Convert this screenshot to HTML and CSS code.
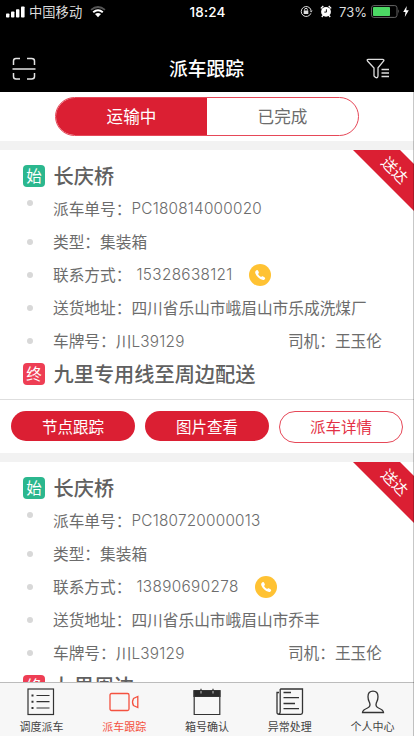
FILE: index.html
```html
<!DOCTYPE html>
<html lang="zh-CN">
<head>
<meta charset="utf-8">
<title>派车跟踪</title>
<link rel="stylesheet" href="styles.css">
</head>
<body>
<div class="app">
  <header class="top">
    <div class="status">
      <div class="status-left">
        <svg width="19" height="12" viewBox="0 0 19 12" fill="#fff"><rect x="0" y="7.5" width="3.4" height="4" rx=".8"/><rect x="5" y="5.5" width="3.4" height="6" rx=".8"/><rect x="10" y="3.2" width="3.4" height="8.300" rx=".8"/><rect x="15" y="0.500" width="3.600" height="11" rx=".8"/></svg>
        <span class="carrier">中国移动</span>
        <svg class="wifi" width="16" height="12" viewBox="0 0 16 12" fill="none"><path d="M1 3.800Q8-1.800 15 3.800" stroke="#555" stroke-width="1.700"/><path d="M3.200 6.200Q8 2.200 12.800 6.200" stroke="#fff" stroke-width="2"/><path d="M5 8.100Q8 5.800 11 8.100L8 11.300Z" fill="#fff"/></svg>
      </div>
      <span class="clock">18:24</span>
      <div class="status-right">
        <svg width="13" height="13" viewBox="0 0 13 13" fill="none" stroke="#ddd"><path d="M10.900 8.300A5 5 0 1 1 11 5"/><path d="M9.600 5.400h3L11.100 7.600z" fill="#ddd" stroke="none"/><rect x="3.700" y="5.500" width="4.600" height="3.500" fill="#ddd" stroke="none"/><path d="M4.600 5.500V4.700a1.400 1.400 0 0 1 2.800 0v.8"/></svg>
        <svg class="alarm" width="12" height="13" viewBox="0 0 12 13"><circle cx="6" cy="6.800" r="4.900" fill="#fff"/><path d="M.8 3.400L3.300 1M11.200 3.400L8.700 1M2.900 10.500L1.800 12M9.100 10.500L10.200 12" stroke="#fff" stroke-width="1.300"/><path d="M6.400 4.300V7.100H4.300" fill="none" stroke="#000" stroke-width=".9"/></svg>
        <span class="percent">73%</span>
        <svg class="battery" width="29" height="13" viewBox="0 0 29 13"><rect x=".6" y=".6" width="25.400" height="11.800" rx="2.200" fill="#000" stroke="#666"/><rect x="2" y="2" width="17" height="9" rx=".8" fill="#4cd964"/><path d="M27 4.300q1.800 2.200 0 4.400z" fill="#777"/></svg>
        <svg width="6" height="11" viewBox="0 0 6 11"><path d="M3.700 0L.2 6.100H2.500L1.800 11 5.800 4.300H3.300z" fill="#fff"/></svg>
      </div>
    </div>
    <div class="nav">
      <svg width="24" height="24" viewBox="0 0 24 24" fill="none" stroke="#e4e4e4" stroke-width="1.500"><path d="M1.500 8V4Q1.500 1.500 4 1.500H8M15 1.500H19.500Q22.500 1.500 22.500 4V8M1.500 16V19.500Q1.500 22 4 22H8M15 22H19.500Q22.500 22 22.500 19.500V16M.5 12H23.500"/></svg>
      <h1>派车跟踪</h1>
      <svg width="24" height="22" viewBox="0 0 24 22" fill="none" stroke="#ddd" stroke-width="1.300"><path d="M2.300 1.300H16.500Q18.500 1.500 17.700 3L12 9.800V17.600Q12 20.600 9.500 19.400L8 18V10L1.500 3Q.5 1.500 2.300 1.300ZM15.500 11.500H23M15.500 15H23M15.500 18.500H23"/></svg>
    </div>
  </header>

  <div class="filter">
    <div class="segments"><span class="segment active">运输中</span><span class="segment">已完成</span></div>
  </div>

  <main class="list">
    <article class="card">
      <div class="ribbon"><span>送达</span></div>
      <div class="details">
        <div class="place"><i class="badge start">始</i><h2>长庆桥</h2></div>
        <div class="row first"><i class="dot"></i><span>派车单号：</span><span class="num order">PC180814000020</span></div>
        <div class="row"><i class="dot"></i><span>类型：集装箱</span></div>
        <div class="row"><i class="dot"></i><span>联系方式：</span><span class="num phone">15328638121</span><svg class="call" width="22" height="22" viewBox="0 0 22 22"><circle cx="11" cy="11" r="11" fill="#ffc233"/><path d="M7.400 6.200Q8.500 5.400 9.300 7L9.900 8.600Q10 9.300 9 10 10 12 12.100 13.100 12.900 11.900 13.800 12.300L15.800 13.500Q16.900 14.600 15.300 15.800 12.700 16.900 9 13.300 5.300 9.200 6.400 7.200Z" fill="#fff"/></svg></div>
        <div class="row"><i class="dot"></i><span>送货地址：四川省乐山市峨眉山市乐成洗煤厂</span></div>
        <div class="row"><i class="dot"></i><span>车牌号：川<span class="num">L39129</span></span><span class="driver">司机：王玉伦</span></div>
        <div class="place end"><i class="badge finish">终</i><h2>九里专用线至周边配送</h2></div>
      </div>
      <div class="actions"><button>节点跟踪</button><button>图片查看</button><button class="outline">派车详情</button></div>
    </article>
    <article class="card">
      <div class="ribbon"><span>送达</span></div>
      <div class="details">
        <div class="place"><i class="badge start">始</i><h2>长庆桥</h2></div>
        <div class="row first"><i class="dot"></i><span>派车单号：</span><span class="num order">PC180720000013</span></div>
        <div class="row"><i class="dot"></i><span>类型：集装箱</span></div>
        <div class="row"><i class="dot"></i><span>联系方式：</span><span class="num phone">13890690278</span><svg class="call" width="22" height="22" viewBox="0 0 22 22"><circle cx="11" cy="11" r="11" fill="#ffc233"/><path d="M7.400 6.200Q8.500 5.400 9.300 7L9.900 8.600Q10 9.300 9 10 10 12 12.100 13.100 12.900 11.900 13.800 12.300L15.800 13.500Q16.900 14.600 15.300 15.800 12.700 16.900 9 13.300 5.300 9.200 6.400 7.200Z" fill="#fff"/></svg></div>
        <div class="row"><i class="dot"></i><span>送货地址：四川省乐山市峨眉山市乔丰</span></div>
        <div class="row"><i class="dot"></i><span>车牌号：川<span class="num">L39129</span></span><span class="driver">司机：王玉伦</span></div>
        <div class="place end"><i class="badge finish">终</i><h2>九里周边</h2></div>
      </div>
    </article>
  </main>

  <nav class="tabs">
    <a class="tab"><svg width="28" height="28" viewBox="0 0 28 28" fill="none" stroke="#333" stroke-width="1.200"><rect x="1" y="1" width="25.500" height="25.500"/><path d="M9.500 7.500H22.500M9.500 13.700H22.500M9.500 20H22.500"/><path d="M4.500 7.500H6.500M4.500 13.700H6.500M4.500 20H6.500" stroke-width="2"/></svg><span>调度派车</span></a>
    <a class="tab selected"><svg width="30" height="28" viewBox="0 0 30 28" fill="none" stroke="#f4513f" stroke-width="1.300"><rect x="1" y="5.500" width="19" height="17" rx="1.500"/><path d="M28.800 8.500V19.500L24.500 17.600Q22.500 14 24.500 10.500Z"/></svg><span>派车跟踪</span></a>
    <a class="tab"><svg width="28" height="28" viewBox="0 0 28 28" fill="none" stroke="#333" stroke-width="1.200"><path d="M1.200 3H26.800V26.500H1.200Z"/><path d="M1 2.500H27V8.500H1Z" fill="#292929"/><path d="M8 3V5.500M20 3V5.500" stroke="#aaa"/><path d="M8 .8V3M20 .8V3"/></svg><span>箱号确认</span></a>
    <a class="tab"><svg width="28" height="28" viewBox="0 0 28 28" fill="none" stroke="#333" stroke-width="1.300"><path d="M4.200 1H26.500V24.500Q26.500 26.300 24.800 26.300H3Q1 26.300 1 24.500V4.500H3M4.200 1V23.500Q4.200 26 2.500 26.200M7.500 4.500H15M7.500 9.700H23M7.500 15.500H19M7.500 20.700H23"/></svg><span>异常处理</span></a>
    <a class="tab"><svg width="24" height="28" viewBox="0 0 24 28" fill="none" stroke="#333" stroke-width="1.300"><path d="M12 3.200C8.500 3.200 7 5.600 7 8.700C7 12 8 13.300 8.700 15C9.500 17.500 9 19 6.500 20C3.500 21.200 1.500 22 1.500 24.500H22.500C22.500 22 20.500 21.200 17.500 20C15 19 14.500 17.500 15.300 15C16 13.300 17 12 17 8.700C17 5.600 15.500 3.200 12 3.200Z"/></svg><span>个人中心</span></a>
  </nav>
</div>
</body>
</html>
```
FILE: styles.css
```css
* { box-sizing: border-box; }
body { margin: 0; font-family: "Noto Sans CJK SC", sans-serif; color: #6c6c6c; }
h1, h2 { margin: 0; font-weight: 500; }
i { font-style: normal; }
svg { display: block; flex: none; }
.app { position: relative; width: 414px; height: 736px; display: flex; flex-direction: column; overflow: hidden; background: #fff; }
.app::after { content: ""; position: absolute; top: 92px; right: 0; bottom: 0; width: 1px; background: rgba(0, 0, 0, .22); }

.top { height: 92px; flex: none; background: #000; color: #fff; }
.status { height: 23px; padding: 0 5px 0 6px; display: grid; grid-template-columns: 1fr auto 1fr; align-items: center; }
.status-left, .status-right { display: flex; align-items: center; }
.status-right { justify-content: flex-end; }
.carrier { margin-left: 4px; font-size: 13.300px; line-height: 20px; color: #ddd; }
.wifi { margin-left: 8px; }
.clock { font: 500 13.500px/20px Inter, sans-serif; letter-spacing: .2px; }
.alarm { margin-left: 7px; }
.percent { margin: 0 4px 0 7px; font: 400 13px/20px Inter, sans-serif; color: #ddd; }
.battery { margin-right: 3px; }
.nav { height: 69px; padding: 22px 24px 0 12px; display: flex; justify-content: space-between; align-items: center; }
.nav h1 { font-size: 18.800px; line-height: 24px; margin: -2px 0 0 11px; }

.filter { height: 58px; flex: none; padding: 5px 55px 0; border-bottom: 9px solid #f2f2f2; }
.segments { height: 39px; display: flex; border: 1px solid #e64858; border-radius: 20px; overflow: hidden; }
.segment { flex: 1; font-size: 16.600px; line-height: 37px; text-align: center; }
.active { background: #db1f33; color: #fff; }

.list { flex: 1; min-height: 0; overflow: hidden; }
.card { position: relative; border-bottom: 9px solid #f2f2f2; }
.details { padding: 9px 23px 9px; }
.place { display: flex; align-items: center; height: 33px; }
.place h2 { margin: 0 0 1px 8.500px; font-size: 20.200px; line-height: 31px; color: #606060; }
.badge { width: 22px; height: 22px; border-radius: 4px; color: #fff; font-size: 15.500px; line-height: 21px; text-align: center; }
.start { background: #2bb78e; }
.finish { background: #ee3e54; }
.row { height: 33px; display: flex; align-items: center; padding-left: 4px; font-size: 15.700px; line-height: 24px; white-space: nowrap; }
.dot { width: 6px; height: 6px; border-radius: 50%; background: #d8d8d8; margin-right: 20px; }
.first .dot { margin-bottom: 11px; }
.num { font-family: Inter, sans-serif; font-size: 15.300px; font-weight: 350; letter-spacing: .24px; line-height: 1; }
.phone { margin-left: 5px; letter-spacing: .36px; }
.call { margin-left: 16.500px; }
.driver { margin-left: auto; margin-right: 9px; }
.actions { height: 54px; padding: 11px 11px 0; display: grid; grid-template-columns: repeat(3, 1fr); gap: 10px; align-items: start; border-top: 1px solid #dedede; }
.actions button { height: 30px; padding: 0 0 1px; border: 0; border-radius: 15px; background: #db1f33; color: #fff; font: 400 15.500px/28px "Noto Sans CJK SC", sans-serif; }
.actions .outline { height: 32px; border: 1px solid #e64858; background: #fff; color: #e33145; border-radius: 16px; line-height: 26px; padding-bottom: 3px; }
.ribbon { position: absolute; top: 0; right: 0; width: 61px; height: 61px; background: #db1f33; clip-path: polygon(0 0, 47px 0, 61px 14px, 61px 61px); color: #fff; }
.ribbon span { position: absolute; left: 22px; top: 10px; width: 40px; height: 20px; font-size: 15px; line-height: 20px; text-align: center; transform: rotate(45deg); }

.tabs { height: 54px; flex: none; display: grid; grid-template-columns: repeat(5, 1fr); background: #f7f7f7; border-top: 1px solid #bcbcbc; }
.tab { display: flex; flex-direction: column; align-items: center; padding-top: 5px; color: #444; }
.tab span { margin-top: 2px; font-size: 11px; line-height: 16px; }
.selected { color: #f4513f; }
```
